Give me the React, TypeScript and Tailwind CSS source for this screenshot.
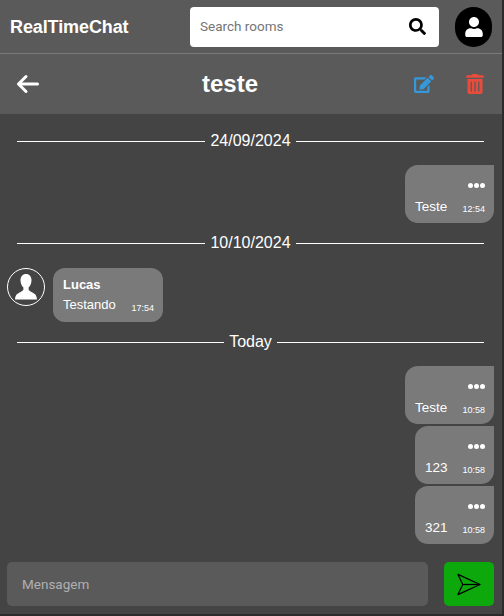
import { FaEdit, FaSearch, FaTrashAlt, FaUser } from "react-icons/fa";

function DateLine({ label }: { label: string }) {
  return (
    <div className="flex items-center gap-[5px] pl-[17px] pr-[18px] text-base leading-[18px] text-white">
      <div className="h-px flex-1 bg-white" />
      <span>{label}</span>
      <div className="h-px flex-1 bg-white" />
    </div>
  );
}

function MyMessage({ text, time, size = "w-[89px]" }: { text: string; time: string; size?: string }) {
  return (
    <div className={`${size} flex h-[58px] flex-col rounded-bl-[13px] rounded-br-[13px] rounded-tl-[13px] bg-[#7a7a7a] pl-[10px] pr-[9px] pt-[18px] text-white`}>
      <div className="flex justify-end gap-[1px]">
        <span className="h-[5px] w-[5px] rounded-full bg-white" />
        <span className="h-[5px] w-[5px] rounded-full bg-white" />
        <span className="h-[5px] w-[5px] rounded-full bg-white" />
      </div>
      <div className="mt-[11px] flex items-end justify-between">
        <span className="text-[13.5px] leading-[16px]">{text}</span>
        <span className="pb-px text-[9px] leading-[10px]">{time}</span>
      </div>
    </div>
  );
}

export default function App() {
  return (
    <div className="h-[616px] w-[504px] overflow-hidden bg-[#2b2b2b]">
      <div className="flex h-[614px] w-[502px] flex-col bg-[#444444] font-['Liberation_Sans',sans-serif]">
        <header className="flex h-[54px] items-center border-b border-[#7a7a7a] bg-[#5a5a5a] pl-[10px] pr-[10px]">
          <h1 className="w-[180px] text-lg font-bold tracking-[-0.1px] text-white">RealTimeChat</h1>
          <div className="flex h-[40px] w-[249px] items-center justify-between rounded-[4px] bg-white pl-[10px] pr-[13px]">
            <span className="font-['Roboto',sans-serif] text-[13.5px] text-[#757575]">Search rooms</span>
            <FaSearch className="h-[17px] w-[17px] text-black" />
          </div>
          <div className="ml-auto flex h-[40px] w-[37px] items-center justify-center rounded-full bg-black">
            <FaUser className="h-[20px] w-[18px] text-white" />
          </div>
        </header>

        <div className="flex h-[60px] items-center bg-[#5a5a5a] pl-[16px] pr-[18px]">
          <div className="w-[30px]">
            <svg viewBox="0 0 24 20" className="h-[20px] w-[24px] text-white" fill="none" stroke="currentColor" strokeWidth="3" strokeLinecap="round" strokeLinejoin="round">
              <path d="M21.5 10H3" />
              <path d="M10 2.5L2.5 10L10 17.5" />
            </svg>
          </div>
          <h2 className="flex-1 text-center text-2xl font-bold text-white">teste</h2>
          <FaEdit className="mr-[32px] h-[20px] w-[20px] text-[#3498db]" />
          <FaTrashAlt className="h-[20px] w-[18px] text-[#e74c3c]" />
        </div>

        <main className="flex flex-1 flex-col pt-[18px]">
          <DateLine label="24/09/2024" />
          <div className="mt-[15px] flex justify-end pr-[8px]">
            <MyMessage text="Teste" time="12:54" />
          </div>
          <div className="mt-[11px]">
            <DateLine label="10/10/2024" />
          </div>
          <div className="mt-[16px] flex items-start gap-[8px] pl-[7px]">
            <div className="flex h-[38px] w-[38px] items-center justify-center rounded-full border border-white">
              <svg viewBox="0 0 22 26" className="h-[26px] w-[22px] text-white" fill="currentColor">
                <path d="M11 0C7.6 0 5.5 2.6 5.5 6.2C5.5 9.2 6.8 12 8.4 13.4V15.6C8.2 16.8 6.6 17.6 4.6 18.6C2.4 19.7 0.4 20.8 0 25.5H22C21.6 20.8 19.6 19.7 17.4 18.6C15.4 17.6 13.8 16.8 13.6 15.6V13.4C15.2 12 16.5 9.2 16.5 6.2C16.5 2.6 14.4 0 11 0Z" />
              </svg>
            </div>
            <div className="h-[54px] w-[110px] rounded-[12px] bg-[#7a7a7a] pl-[10px] pr-[9px] pt-[9px] text-white">
              <div className="text-[13px] font-bold leading-[15px]">Lucas</div>
              <div className="mt-[5px] flex items-end justify-between">
                <span className="text-[13px] leading-[16px]">Testando</span>
                <span className="text-[9px] leading-[10px]">17:54</span>
              </div>
            </div>
          </div>
          <div className="mt-[11px]">
            <DateLine label="Today" />
          </div>
          <div className="mt-[15px] flex flex-col items-end gap-[2px] pr-[8px]">
            <MyMessage text="Teste" time="10:58" />
            <MyMessage text="123" time="10:58" size="w-[79px]" />
            <MyMessage text="321" time="10:58" size="w-[79px]" />
          </div>
        </main>

        <footer className="flex items-center gap-[16px] pb-[8px] pl-[7px] pr-[8px]">
          <div className="flex h-[44px] w-[421px] items-center rounded-[5px] bg-[#5a5a5a] pl-[15px] font-['Roboto',sans-serif] text-[13.5px] text-[#b0b0b0]">
            Mensagem
          </div>
          <div className="flex h-[44px] w-[50px] items-center justify-center rounded-[5px] bg-[#0ca80c]">
            <svg viewBox="0 0 26 24" className="h-[23px] w-[26px] text-black" fill="none" stroke="currentColor" strokeWidth="1.3" strokeLinejoin="round">
              <path d="M1.5 1.5L24.5 12L1.5 22.5L6.5 12Z" />
              <path d="M6.5 12H24.5" />
            </svg>
          </div>
        </footer>
      </div>
    </div>
  );
}
